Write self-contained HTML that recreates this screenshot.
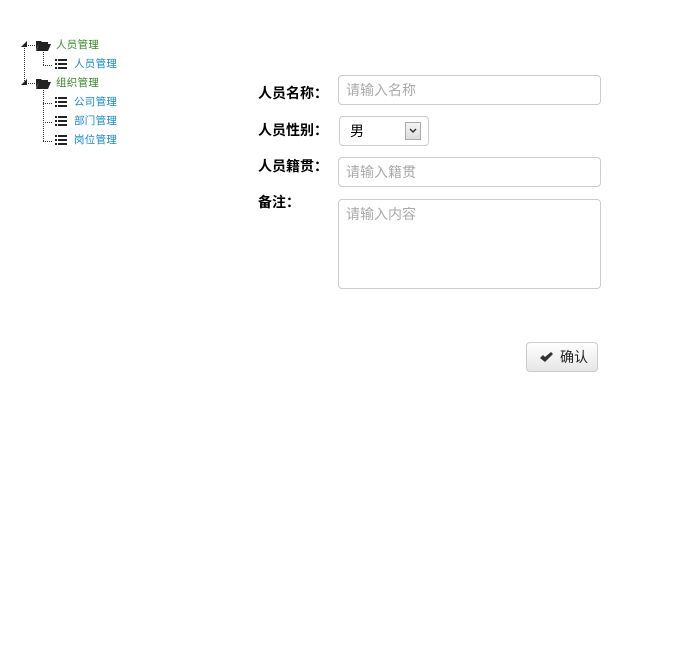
<!DOCTYPE html>
<html><head><meta charset="utf-8"><style>
body{margin:0;width:683px;height:654px;background:#fff;font-family:"Liberation Sans","Noto Sans CJK SC",sans-serif;position:relative;overflow:hidden}
.a{position:absolute}
.t{font-size:10.5px;line-height:12px;white-space:nowrap;letter-spacing:0.3px}
.g{color:#3a8a2a}.b{color:#1a8ad0}
.vd{border-left:1px dotted #333}
.hd{border-top:1px dotted #333}
.lbl{font-size:14px;font-weight:bold;color:#000;line-height:16px}
.in{border:1px solid #ccc;border-radius:4px;background:#fff;box-sizing:border-box;color:#aaa;font-size:14px;padding-left:7px}
</style></head><body>
<!-- tree -->
<div class="a vd" style="left:24px;top:46px;height:37px"></div>
<div class="a" style="left:21px;top:41px;width:0;height:0;border-left:6px solid transparent;border-bottom:6px solid #222"></div>
<div class="a hd" style="left:28px;top:45px;width:7px"></div>
<svg class="a" style="left:36px;top:40px" width="15" height="11" viewBox="0 0 15 11"><path d="M0 1h5l1 1h6v2H3L0 10z M3 4h12l-3 7H0z" fill="#222"/></svg>
<div class="a t g" style="left:56px;top:39px">人员管理</div>
<div class="a vd" style="left:43px;top:52px;height:13px"></div>
<div class="a hd" style="left:43px;top:65px;width:9px"></div>
<svg class="a" style="left:55px;top:59px" width="12" height="10"><g fill="#222"><rect x="0" y="0" width="2" height="2"/><rect x="3" y="0" width="9" height="2"/><rect x="0" y="4" width="2" height="2"/><rect x="3" y="4" width="9" height="2"/><rect x="0" y="8" width="2" height="2"/><rect x="3" y="8" width="9" height="2"/></g></svg>
<div class="a t b" style="left:74px;top:58px">人员管理</div>

<div class="a" style="left:21px;top:79px;width:0;height:0;border-left:6px solid transparent;border-bottom:6px solid #222"></div>
<div class="a hd" style="left:28px;top:83px;width:7px"></div>
<svg class="a" style="left:36px;top:78px" width="15" height="11" viewBox="0 0 15 11"><path d="M0 1h5l1 1h6v2H3L0 10z M3 4h12l-3 7H0z" fill="#222"/></svg>
<div class="a t g" style="left:56px;top:77px">组织管理</div>
<div class="a vd" style="left:43px;top:90px;height:51px"></div>
<div class="a hd" style="left:43px;top:103px;width:9px"></div>
<div class="a hd" style="left:43px;top:122px;width:9px"></div>
<div class="a hd" style="left:43px;top:141px;width:9px"></div>
<svg class="a" style="left:55px;top:97px" width="12" height="10"><g fill="#222"><rect x="0" y="0" width="2" height="2"/><rect x="3" y="0" width="9" height="2"/><rect x="0" y="4" width="2" height="2"/><rect x="3" y="4" width="9" height="2"/><rect x="0" y="8" width="2" height="2"/><rect x="3" y="8" width="9" height="2"/></g></svg>
<svg class="a" style="left:55px;top:116px" width="12" height="10"><g fill="#222"><rect x="0" y="0" width="2" height="2"/><rect x="3" y="0" width="9" height="2"/><rect x="0" y="4" width="2" height="2"/><rect x="3" y="4" width="9" height="2"/><rect x="0" y="8" width="2" height="2"/><rect x="3" y="8" width="9" height="2"/></g></svg>
<svg class="a" style="left:55px;top:135px" width="12" height="10"><g fill="#222"><rect x="0" y="0" width="2" height="2"/><rect x="3" y="0" width="9" height="2"/><rect x="0" y="4" width="2" height="2"/><rect x="3" y="4" width="9" height="2"/><rect x="0" y="8" width="2" height="2"/><rect x="3" y="8" width="9" height="2"/></g></svg>
<div class="a t b" style="left:74px;top:96px">公司管理</div>
<div class="a t b" style="left:74px;top:115px">部门管理</div>
<div class="a t b" style="left:74px;top:134px">岗位管理</div>

<!-- form -->
<div class="a lbl" style="left:258px;top:85px">人员名称：</div>
<div class="a in" style="left:338px;top:75px;width:263px;height:30px;line-height:28px">请输入名称</div>
<div class="a lbl" style="left:258px;top:122px">人员性别：</div>
<div class="a in" style="left:339px;top:116px;width:90px;height:30px;line-height:28px;color:#000;padding-left:10px">男</div>
<div class="a" style="left:405px;top:122px;width:16px;height:18px;border:1px solid #aaa;background:linear-gradient(#f4f4f4,#ddd);box-sizing:border-box"><svg class="a" style="left:3px;top:5px" width="8" height="6"><path d="M1 1l3 3 3-3" stroke="#333" stroke-width="1.5" fill="none"/></svg></div>
<div class="a lbl" style="left:258px;top:158px">人员籍贯：</div>
<div class="a in" style="left:338px;top:157px;width:263px;height:30px;line-height:28px">请输入籍贯</div>
<div class="a lbl" style="left:258px;top:194px">备注：</div>
<div class="a in" style="left:338px;top:199px;width:263px;height:90px;line-height:28px">请输入内容</div>

<div class="a" style="left:526px;top:342px;width:72px;height:30px;border:1px solid #ccc;border-radius:4px;box-sizing:border-box;background:linear-gradient(#fff,#e6e6e6);font-size:14px;line-height:28px;color:#222">
<svg class="a" style="left:12px;top:9px" width="14" height="11" viewBox="0 0 14 11"><path d="M1 6l3-3 2 2 6-5 2 2-8 8z" fill="#333"/></svg>
<span class="a" style="left:33px;top:0">确认</span></div>
</body></html>
